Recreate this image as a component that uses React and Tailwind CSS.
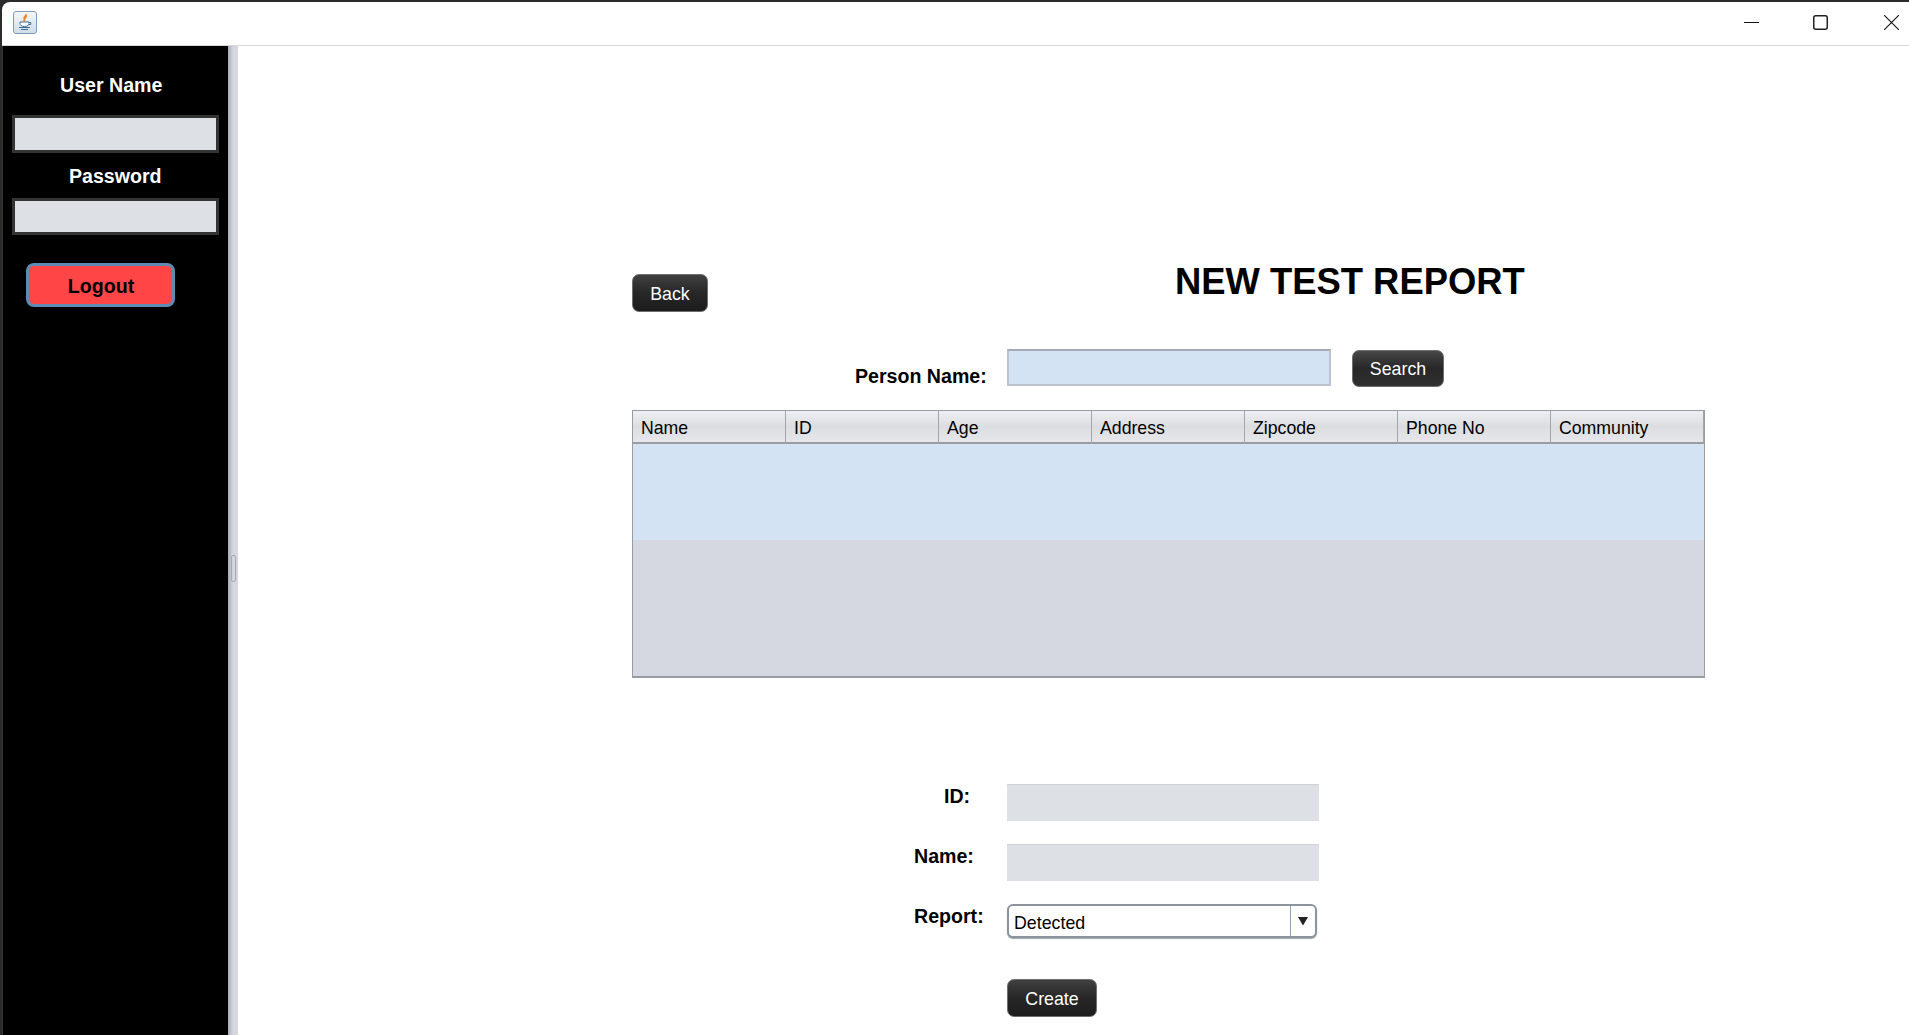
const columns = ["Name", "ID", "Age", "Address", "Zipcode", "Phone No", "Community"];

function DarkButton({ children, className }) {
  return (
    <button className={`flex items-center justify-center rounded-[7px] border border-[#6e6e6e] bg-gradient-to-b from-[#404040] via-[#272727] to-[#1c1c1c] text-[17.8px] text-white ${className}`}>
      {children}
    </button>
  );
}

function JavaIcon() {
  return (
    <div className="flex h-[23px] w-[24px] items-center justify-center rounded-[3px] border border-[#7f9bb5] bg-gradient-to-b from-[#f4f7fa] to-[#d3dde6]">
      <svg width="18" height="18" viewBox="0 0 18 18" fill="none">
        <path d="M10 1c1 2-3 3-2 6 .3-1.500 2.500-2.500 2.500-4.500M9 3c-1 1.500-1.500 3 0 5" stroke="#e9862c" strokeWidth="1.500" />
        <path d="M4 9h9v1.500c0 1.500-1.500 3-4.500 3S4 12 4 10.500zM13 9.500h1.800v2H12.500" fill="#fff" stroke="#3f6f96" strokeWidth="1" />
        <path d="M3 14.500h11M5 16.500h7" stroke="#3f6f96" strokeWidth="1.100" />
      </svg>
    </div>
  );
}

function SideInput({ className }) {
  return (
    <div className={`w-[207px] border-[3px] border-[#333333] bg-[#dde0e5] ${className}`} />
  );
}

function FormRow({ label, indent, children }) {
  return (
    <div className="flex">
      <div className={`w-[375px] pt-[1px] text-[19.6px] leading-[22px] font-bold text-black ${indent}`}>{label}</div>
      {children}
    </div>
  );
}

function ReadonlyField() {
  return <div className="h-[37px] w-[312px] border-t border-[#d0d2d6] bg-[#dde0e5]" />;
}

export default function App() {
  return (
    <div className="h-[1035px] w-[1909px] overflow-hidden bg-[#2b2b2b] pt-[2px] pl-[2px] font-['Liberation_Sans',Arial,sans-serif]">
      <div className="flex h-[1033px] flex-col overflow-hidden rounded-tl-[8px] bg-white">
        {/* title bar */}
        <div className="flex h-[44px] shrink-0 items-center border-b border-[#d8d8d8] pb-[3px] pl-[11px]">
          <JavaIcon />
          <div className="ml-auto flex items-center">
            <svg width="15" height="15" viewBox="0 0 15 15" className="mr-[54px]">
              <path d="M0 7.500h15" stroke="#111" strokeWidth="1" />
            </svg>
            <svg width="15" height="15" viewBox="0 0 15 15" className="mr-[56px]">
              <rect x="0.750" y="0.750" width="13.500" height="13.500" rx="2" fill="none" stroke="#222" strokeWidth="1.500" />
            </svg>
            <svg width="15" height="15" viewBox="0 0 15 15" className="mr-[10px]">
              <path d="M0 0l15 15M15 0L0 15" stroke="#111" strokeWidth="1.100" />
            </svg>
          </div>
        </div>

        <div className="flex min-h-0 flex-1">
          {/* sidebar */}
          <div className="w-[226px] shrink-0 border-l border-[#333333] bg-black pt-[28px]">
            <div className="ml-[57px] text-[19.6px] leading-[22px] font-bold text-white">User Name</div>
            <div className="mt-[19px] ml-[9px]"><SideInput className="h-[38px]" /></div>
            <div className="mt-[12px] ml-[66px] text-[19.6px] leading-[22px] font-bold text-white">Password</div>
            <div className="mt-[11px] ml-[9px]"><SideInput className="h-[37px]" /></div>
            <button className="mt-[28px] ml-[23px] flex h-[44px] w-[149px] items-center justify-center rounded-[8px] border-[3px] border-[#5f8bb3] bg-[#ff4545] pt-[3px] pl-[1px] text-[19.6px] font-bold text-black">
              Logout
            </button>
          </div>

          {/* split divider */}
          <div className="w-[10px] shrink-0 bg-gradient-to-r from-[#a9abb5] via-[#d5d7e0] to-[#d5d7e0] pt-[509px] pl-[3px]">
            <div className="h-[27px] w-[5px] rounded-[2px] border border-[#a6a8b2]" />
          </div>

          {/* main form */}
          <div className="min-w-0 flex-1 pt-[215px] pl-[394px]">
            <div className="flex h-[51px] w-[1073px] items-start">
              <DarkButton className="mt-[13px] h-[38px] w-[76px] pt-[2px]">Back</DarkButton>
              <h1 className="ml-[467px] text-[36.4px] leading-[41px] font-bold whitespace-nowrap text-black">NEW TEST REPORT</h1>
            </div>

            <div className="mt-[37px] ml-[223px] flex items-start">
              <div className="mt-[16px] w-[131px] text-[19.6px] leading-[22px] font-bold whitespace-nowrap text-black">Person Name:</div>
              <div className="ml-[21px] h-[37px] w-[324px] border-2 border-[#bcc3cc] border-t-[#a5abb5] bg-[#d3e3f3]" />
              <DarkButton className="mt-[1px] ml-[21px] h-[37px] w-[92px] from-[#484848] via-[#2c2c2c] to-[#303030] pt-[1px]">Search</DarkButton>
            </div>

            <div className="mt-[23px] flex h-[268px] w-[1073px] flex-col border border-b-2 border-[#9a9ca4] bg-[#d5d8e1]">
              <div className="grid h-[33px] shrink-0 grid-cols-7 border-b-2 border-[#9a9ca4] bg-gradient-to-b from-[#eff0f3] via-[#dcdde1] to-[#e6e7ea]">
                {columns.map((col) => (
                  <div key={col} className="border-r border-[#a4a6ae] pl-[8px] text-[17.7px] leading-[35px] text-black">
                    {col}
                  </div>
                ))}
              </div>
              <div className="h-[96px] shrink-0 bg-[#d3e3f3]" />
            </div>

            <div className="mt-[106px] flex flex-col gap-[23px]">
              <FormRow label="ID:" indent="pl-[312px]"><ReadonlyField /></FormRow>
              <FormRow label="Name:" indent="pl-[282px]"><ReadonlyField /></FormRow>
              <FormRow label="Report:" indent="pl-[282px]">
                <div className="flex h-[34px] w-[310px] items-center rounded-[6px] border-2 border-[#8d939c] bg-white shadow-[0_1px_1px_#9aa]">
                  <span className="flex-1 pt-[4px] pl-[5px] text-[17.8px] text-black">Detected</span>
                  <span className="flex h-full w-[25px] items-center justify-center border-l border-[#8fa3b8]">
                    <svg width="12" height="10" viewBox="0 0 12 10"><path d="M1 1h10L6 9.500z" fill="#222" /></svg>
                  </span>
                </div>
              </FormRow>
            </div>

            <DarkButton className="mt-[41px] ml-[375px] h-[38px] w-[90px] pt-[2px]">Create</DarkButton>
          </div>
        </div>
      </div>
    </div>
  );
}
